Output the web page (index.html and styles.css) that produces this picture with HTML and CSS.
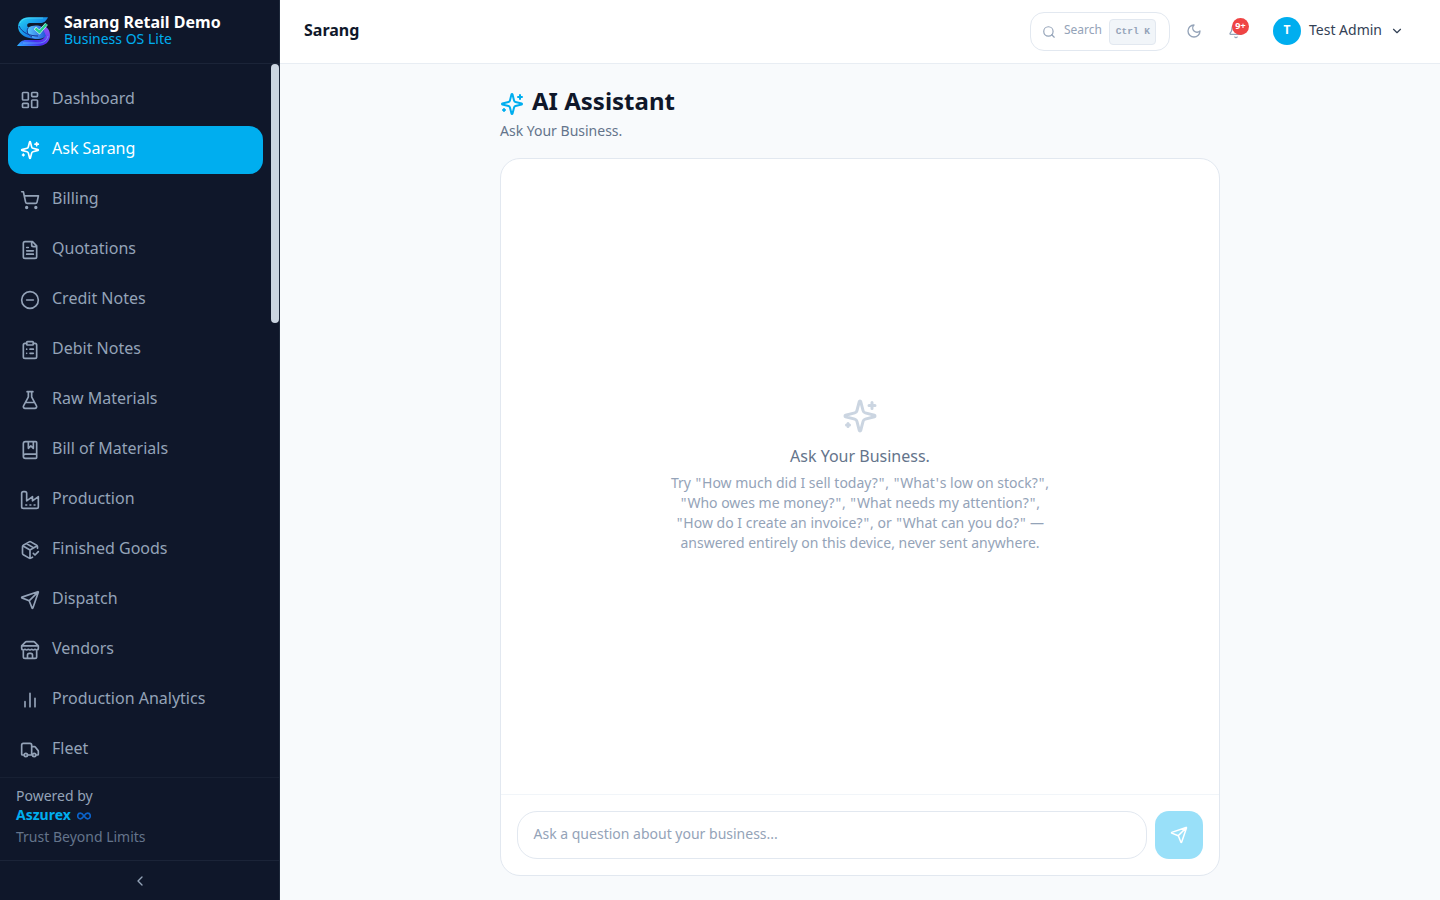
FILE: index.html
```html
<!DOCTYPE html>
<html lang="en">
<head>
<meta charset="utf-8">
<title>Sarang - AI Assistant</title>
<link rel="stylesheet" href="styles.css">
</head>
<body>
<svg class="defs" aria-hidden="true">
  <symbol id="sparkles" viewBox="0 0 24 24"><path d="M9.937 15.5A2 2 0 0 0 8.5 14.063l-6.135-1.582a.5.5 0 0 1 0-.962L8.5 9.936A2 2 0 0 0 9.937 8.5l1.582-6.135a.5.5 0 0 1 .963 0L14.063 8.5A2 2 0 0 0 15.5 9.937l6.135 1.581a.5.5 0 0 1 0 .964L15.5 14.063a2 2 0 0 0-1.437 1.437l-1.582 6.135a.5.5 0 0 1-.963 0zM20 3v4M22 5h-4M4 17v2M5 18H3"/></symbol>
  <symbol id="send" viewBox="0 0 24 24"><path d="M14.536 21.686a.5.5 0 0 0 .937-.024l6.5-19a.496.496 0 0 0-.635-.635l-19 6.5a.5.5 0 0 0-.024.937l7.93 3.18a2 2 0 0 1 1.112 1.11zM21.854 2.147l-10.94 10.939"/></symbol>
</svg>
<div class="app">
  <aside class="sidebar">
    <div class="brand">
      <svg class="logo" viewBox="0 0 36 36">
        <defs>
          <linearGradient id="lg1" x1="0" y1="0" x2="1" y2="1"><stop offset="0" stop-color="#25d9f5"/><stop offset=".5" stop-color="#178fe8"/><stop offset="1" stop-color="#2440d8"/></linearGradient>
          <linearGradient id="lg2" x1="0" y1="1" x2="1" y2="0"><stop offset="0" stop-color="#29b6ff"/><stop offset=".4" stop-color="#4a2df0"/><stop offset="1" stop-color="#9a5cf5"/></linearGradient>
          <linearGradient id="lg3" x1="0" y1="0" x2="1" y2="0"><stop offset="0" stop-color="#58c8ff"/><stop offset="1" stop-color="#2354d8"/></linearGradient>
        </defs>
        <path d="M32 3.200c-2 4-4 5.800-8 5.800H14c-3 0-4 3-1 5l9 5c3 2 3 5 0 6-8 0-16-2-19-8C0 9 5 3.200 13 3.200z" fill="url(#lg1)"/>
        <path d="M26 12c5 0 8 4 8 9 0 7-5 11-12 11H1c3-4 5-6 9-6h13c5 0 7-4 5-7z" fill="url(#lg2)"/>
        <path d="M12 14c4-3 10-3 14-1l4 9c-3 3-8 4-13 2-4-2-7-6-5-10z" fill="url(#lg3)"/>
        <path d="M3 12c3 7 11 10 19 10M12 14c-2 4 0 7 4 9" fill="none" stroke="#173190" stroke-width="1"/>
        <path d="M4 9c2-4 6-5 11-5h12M7 29h16c5 0 8-3 9-7" fill="none" stroke="#6ee8ff" stroke-width=".8" opacity=".6"/>
        <path d="M19 14l4.500 4 7-8" fill="none" stroke="#e8fff8" stroke-width="3.400"/>
        <path d="M19.500 14.500l4 3.500 7-8" fill="none" stroke="#22cf91" stroke-width="2.400"/>
      </svg>
      <div class="brand-text"><div class="brand-name">Sarang Retail Demo</div><div class="brand-sub">Business OS Lite</div></div>
    </div>
    <div class="nav-wrap">
      <nav class="nav">
        <a class="item"><svg class="icon" viewBox="0 0 24 24"><rect x="3" y="3" width="7" height="9" rx="1"/><rect x="14" y="3" width="7" height="5" rx="1"/><rect x="14" y="12" width="7" height="9" rx="1"/><rect x="3" y="16" width="7" height="5" rx="1"/></svg><span>Dashboard</span></a>
        <a class="item active"><svg class="icon"><use href="#sparkles"/></svg><span>Ask Sarang</span></a>
        <a class="item"><svg class="icon" viewBox="0 0 24 24"><circle cx="8" cy="21" r="1"/><circle cx="19" cy="21" r="1"/><path d="M2.050 2.050h2l2.660 12.420a2 2 0 0 0 2 1.580h9.780a2 2 0 0 0 1.950-1.570l1.650-7.430H5.120"/></svg><span>Billing</span></a>
        <a class="item"><svg class="icon" viewBox="0 0 24 24"><path d="M15 2H6a2 2 0 0 0-2 2v16a2 2 0 0 0 2 2h12a2 2 0 0 0 2-2V7ZM14 2v4a2 2 0 0 0 2 2h4M10 9H8M16 13H8M16 17H8"/></svg><span>Quotations</span></a>
        <a class="item"><svg class="icon" viewBox="0 0 24 24"><circle cx="12" cy="12" r="10"/><path d="M8 12h8"/></svg><span>Credit Notes</span></a>
        <a class="item"><svg class="icon" viewBox="0 0 24 24"><rect x="8" y="2" width="8" height="4" rx="1"/><path d="M16 4h2a2 2 0 0 1 2 2v14a2 2 0 0 1-2 2H6a2 2 0 0 1-2-2V6a2 2 0 0 1 2-2h2M12 11h4M12 16h4M8 11h.01M8 16h.01"/></svg><span>Debit Notes</span></a>
        <a class="item"><svg class="icon" viewBox="0 0 24 24"><path d="M14 2v6a2 2 0 0 0 .245.960l5.510 10.080A2 2 0 0 1 18 22H6a2 2 0 0 1-1.755-2.960l5.510-10.080A2 2 0 0 0 10 8V2M6.453 15h11.094M8.500 2h7"/></svg><span>Raw Materials</span></a>
        <a class="item"><svg class="icon" viewBox="0 0 24 24"><path d="M10 2v8l3-3 3 3V2M4 19.500v-15A2.500 2.500 0 0 1 6.500 2H19a1 1 0 0 1 1 1v18a1 1 0 0 1-1 1H6.500a1 1 0 0 1 0-5H20"/></svg><span>Bill of Materials</span></a>
        <a class="item"><svg class="icon" viewBox="0 0 24 24"><path d="M2 20a2 2 0 0 0 2 2h16a2 2 0 0 0 2-2V8l-7 5V8l-7 5V4a2 2 0 0 0-2-2H4a2 2 0 0 0-2 2ZM17 18h1M12 18h1M7 18h1"/></svg><span>Production</span></a>
        <a class="item"><svg class="icon" viewBox="0 0 24 24"><path d="m16 16 2 2 4-4M21 10V8a2 2 0 0 0-1-1.730l-7-4a2 2 0 0 0-2 0l-7 4A2 2 0 0 0 3 8v8a2 2 0 0 0 1 1.730l7 4a2 2 0 0 0 2 0l2-1.140M7.500 4.270l9 5.150M3.290 7 12 12l8.710-5M12 22V12"/></svg><span>Finished Goods</span></a>
        <a class="item"><svg class="icon"><use href="#send"/></svg><span>Dispatch</span></a>
        <a class="item"><svg class="icon" viewBox="0 0 24 24"><path d="m2 7 4.410-4.410A2 2 0 0 1 7.830 2h8.340a2 2 0 0 1 1.420.590L22 7M4 12v8a2 2 0 0 0 2 2h12a2 2 0 0 0 2-2v-8M15 22v-4a2 2 0 0 0-2-2h-2a2 2 0 0 0-2 2v4M2 7h20M22 7v3a2 2 0 0 1-2 2a2.700 2.700 0 0 1-1.590-.630.700.700 0 0 0-.820 0A2.700 2.700 0 0 1 16 12a2.700 2.700 0 0 1-1.590-.630.700.700 0 0 0-.820 0A2.700 2.700 0 0 1 12 12a2.700 2.700 0 0 1-1.590-.630.700.700 0 0 0-.820 0A2.700 2.700 0 0 1 8 12a2.700 2.700 0 0 1-1.590-.630.700.700 0 0 0-.820 0A2.700 2.700 0 0 1 4 12a2 2 0 0 1-2-2V7"/></svg><span>Vendors</span></a>
        <a class="item"><svg class="icon" viewBox="0 0 24 24"><path d="M6 20v-6M12 20V4M18 20V10"/></svg><span>Production Analytics</span></a>
        <a class="item"><svg class="icon" viewBox="0 0 24 24"><path d="M14 18V6a2 2 0 0 0-2-2H4a2 2 0 0 0-2 2v11a1 1 0 0 0 1 1h2M15 18H9M19 18h2a1 1 0 0 0 1-1v-3.650a1 1 0 0 0-.220-.624l-3.480-4.350A1 1 0 0 0 17.520 8H14"/><circle cx="17" cy="18" r="2"/><circle cx="7" cy="18" r="2"/></svg><span>Fleet</span></a>
      </nav>
      <div class="thumb"></div>
    </div>
    <div class="powered">
      <div class="by">Powered by</div>
      <div class="company">Aszurex <svg class="infinity" viewBox="0 0 14 8"><path d="M7 4C5.500 2 4.800 1.200 3.500 1.200a2.800 2.800 0 0 0 0 5.600C4.800 6.800 5.500 6 7 4s2.200-2.800 3.500-2.800a2.800 2.800 0 0 1 0 5.600C9.200 6.800 8.500 6 7 4z"/></svg></div>
      <div class="motto">Trust Beyond Limits</div>
    </div>
    <div class="collapse"><svg class="icon small" viewBox="0 0 24 24"><path d="m15 18-6-6 6-6"/></svg></div>
  </aside>
  <div class="content">
    <header class="topbar">
      <div class="page-name">Sarang</div>
      <div class="tools">
        <div class="search"><svg class="icon" viewBox="0 0 24 24"><circle cx="11" cy="11" r="8"/><path d="m21 21-4.300-4.300"/></svg><span>Search</span><kbd>Ctrl K</kbd></div>
        <div class="tool moon"><svg class="icon" viewBox="0 0 24 24"><path d="M12 3a6 6 0 0 0 9 9 9 9 0 1 1-9-9Z"/></svg></div>
        <div class="tool bell"><svg class="icon" viewBox="0 0 24 24"><path d="M10.268 21a2 2 0 0 0 3.464 0M3.262 15.326A1 1 0 0 0 4 17h16a1 1 0 0 0 .740-1.673C19.410 13.956 18 12.499 18 8A6 6 0 0 0 6 8c0 4.499-1.411 5.956-2.738 7.326"/></svg><b class="badge">9+</b></div>
        <div class="user"><div class="avatar">T</div><span>Test Admin</span><svg class="icon" viewBox="0 0 24 24"><path d="m6 9 6 6 6-6"/></svg></div>
      </div>
    </header>
    <main class="main">
      <div class="heading"><svg class="icon"><use href="#sparkles"/></svg><h1>AI Assistant</h1></div>
      <p class="subtitle">Ask Your Business.</p>
      <section class="card">
        <div class="empty">
          <svg class="icon"><use href="#sparkles"/></svg>
          <p class="empty-title">Ask Your Business.</p>
          <p class="empty-text">Try <i>"</i>How much did I sell today?<i>"</i>, <i>"</i>What<i>'</i>s low on stock?<i>"</i>,<br><i>"</i>Who owes me money?<i>"</i>, <i>"</i>What needs my attention?<i>"</i>,<br><i>"</i>How do I create an invoice?<i>"</i>, or <i>"</i>What can you do?<i>"</i> —<br>answered entirely on this device, never sent anywhere.</p>
        </div>
        <div class="composer"><div class="field">Ask a question about your business...</div><button class="send"><svg class="icon"><use href="#send"/></svg></button></div>
      </section>
    </main>
  </div>
</div>
</body>
</html>
```

FILE: styles.css
```css
* { box-sizing: border-box; }
body { margin: 0; font-family: "Noto Sans", sans-serif; font-size: 16px; line-height: 24px; color: #0f172a; }
h1, p { margin: 0; }
.defs { position: absolute; width: 0; height: 0; }
.icon { width: 20px; height: 20px; flex: none; display: block; fill: none; stroke: currentColor; stroke-width: 2; stroke-linecap: round; stroke-linejoin: round; }
.app { display: flex; height: 900px; overflow: hidden; background: #f8fafc; }

.sidebar { width: 280px; flex: none; display: flex; flex-direction: column; background: #0f172a; border-right: 1px solid #1e293b; color: #94a3b8; }
.brand { height: 64px; flex: none; display: flex; align-items: center; gap: 12px; padding: 0 16px; border-bottom: 1px solid #1b2438; }
.logo { width: 36px; height: 36px; }
.brand-text { padding-bottom: 2px; }
.brand-name { font-weight: 700; line-height: 16px; color: #fff; }
.brand-sub { font-size: 14px; line-height: 18px; color: #00aeef; }
.nav-wrap { position: relative; flex: 1; min-height: 0; overflow: hidden; }
.nav { display: flex; flex-direction: column; gap: 2px; padding: 12px 16px 12px 8px; }
.item { height: 48px; flex: none; display: flex; align-items: center; gap: 12px; padding: 0 12px; border-radius: 14px; }
.item span { padding-bottom: 4px; }
.item.active { background: #00aeef; color: #fff; }
.thumb { position: absolute; top: 0; right: 0; width: 8px; height: 259px; border-radius: 4px; background: #cbd5e1; }
.powered { height: 83px; flex: none; padding: 8px 16px; border-top: 1px solid #172033; font-size: 14px; line-height: 20px; }
.company { display: flex; align-items: center; gap: 6px; height: 18px; font-weight: 700; color: #00aeef; }
.infinity { width: 14px; height: 8px; margin-top: 2px; fill: none; stroke: #0b62c8; stroke-width: 1.700; }
.motto { padding-top: 3px; color: #64748b; }
.collapse { height: 40px; flex: none; display: flex; align-items: center; justify-content: center; border-top: 1px solid #1b2438; }
.icon.small { width: 16px; height: 16px; }

.content { flex: 1; display: flex; flex-direction: column; }
.topbar { height: 64px; flex: none; display: flex; align-items: center; justify-content: space-between; padding: 0 36px 0 24px; background: #fff; border-bottom: 1px solid #e8edf3; }
.page-name { font-weight: 700; padding-bottom: 3px; }
.tools { display: flex; align-items: center; padding-bottom: 1px; color: #94a3b8; }
.search { width: 140px; height: 39px; display: flex; align-items: center; gap: 7.500px; padding: 0 11.500px; border: 1px solid #e2e8f0; border-radius: 14px; font-size: 12px; line-height: 16px; }
.search .icon { width: 14px; height: 14px; margin-top: 1px; }
.search span { padding-bottom: 3px; }
kbd { width: 47px; height: 26px; flex: none; display: flex; align-items: center; justify-content: center; margin-top: 2px; padding-bottom: 1px; border: 1px solid #e2e8f0; border-radius: 4px; background: #f1f5f9; font-family: "Liberation Mono", monospace; font-size: 9.500px; font-weight: 700; }
.tool { position: relative; width: 16px; height: 16px; }
.tool .icon { width: 16px; height: 16px; }
.moon { margin-left: 16px; }
.bell { margin-left: 26px; }
.badge { position: absolute; left: 4px; top: -5px; width: 17px; height: 17px; border-radius: 50%; background: #ef4444; color: #fff; font-size: 9px; line-height: 15px; text-align: center; }
.user { display: flex; align-items: center; gap: 8px; margin-left: 29px; font-size: 14px; color: #334155; }
.avatar { width: 28px; height: 28px; border-radius: 50%; background: #00aeef; color: #fff; font-size: 12px; font-weight: 700; line-height: 26px; text-align: center; }
.user span { padding-bottom: 3px; }
.user .icon { width: 14px; height: 14px; }

.main { width: 720px; flex: 1; min-height: 0; margin: 0 auto; padding: 24px 0; display: flex; flex-direction: column; }
.heading { display: flex; align-items: center; gap: 8px; height: 32px; }
.heading .icon { width: 24px; height: 24px; color: #00aeef; }
h1 { font-size: 24px; line-height: 32px; font-weight: 700; padding-bottom: 6px; }
.subtitle { font-size: 14px; line-height: 20px; height: 38px; padding-top: 1px; color: #64748b; }
.card { flex: 1; min-height: 0; display: flex; flex-direction: column; border: 1px solid #e2e8f0; border-radius: 20px; background: #fff; }
.empty { flex: 1; display: flex; flex-direction: column; align-items: center; justify-content: center; padding-bottom: 3px; text-align: center; }
.empty .icon { width: 36px; height: 36px; color: #cbd5e1; }
.empty-title { margin-top: 10px; color: #64748b; }
.empty-text { margin-top: 5px; font-size: 14px; line-height: 20px; color: #94a3b8; }
.empty-text i { margin: 0 .900px; font-style: normal; }
.composer { height: 81px; flex: none; display: flex; gap: 8px; padding: 16px; border-top: 1px solid #f1f5f9; }
.field { flex: 1; height: 48px; padding: 0 15.500px; border: 1px solid #e2e8f0; border-radius: 20px; font-size: 14px; line-height: 43px; color: #94a3b8; }
.send { width: 48px; height: 48px; display: flex; align-items: center; justify-content: center; padding: 0; border: 0; border-radius: 14px; background: #99e0f9; color: #fff; }
.send .icon { width: 18px; height: 18px; }
```
